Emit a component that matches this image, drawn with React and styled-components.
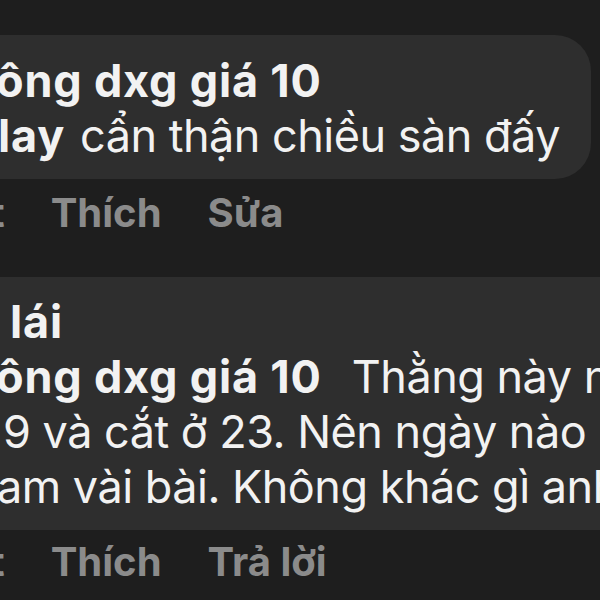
import React from 'react';
import styled, { createGlobalStyle } from 'styled-components';

const Global = createGlobalStyle`
  html, body {
    margin: 0;
    padding: 0;
    background: #1e1e1e;
    overflow: hidden;
  }
  body {
    font-family: Inter, "Noto Sans", "Liberation Sans", sans-serif;
    -webkit-font-smoothing: antialiased;
  }
`;

const Thread = styled.div`
  width: 600px;
  height: 600px;
  padding-top: 35px;
  box-sizing: border-box;
  display: flex;
  flex-direction: column;
  overflow: hidden;
`;

const Bubble = styled.div`
  background: #2e2e2e;
  border-radius: 0 36px 36px 0;
  width: ${p => p.wide ? '700px' : '591px'};
  padding: ${p => p.wide ? '17px 0 16px' : '18px 0 16px'};
  box-sizing: border-box;
  color: #f2f2f2;
  font-size: 45px;
  line-height: 55px;
  letter-spacing: -0.5px;
`;

const Line = styled.div`
  white-space: nowrap;
  margin-left: ${p => p.indent || 0}px;
`;

const Name = styled.b`
  font-weight: 700;
  letter-spacing: 0.8px;
  margin-right: ${p => p.gap || 0}px;
`;

const Actions = styled.div`
  display: flex;
  gap: 46px;
  white-space: nowrap;
  color: #8b8b8b;
  font-size: 40px;
  font-weight: 700;
  line-height: 50px;
  padding: ${p => p.pad};
  margin-left: -85px;
`;

function Comment({ lines, actions, wide, pad }) {
  return (
    <>
      <Bubble wide={wide}>
        {lines.map((l, i) => (
          <Line key={i} indent={l.indent}>
            {l.name && <Name gap={l.gap}>{l.name}</Name>}
            {l.text}
          </Line>
        ))}
      </Bubble>
      <Actions pad={pad}>
        {actions.map(a => <span key={a}>{a}</span>)}
      </Actions>
    </>
  );
}

export default function App() {
  return (
    <>
      <Global />
      <Thread>
        <Comment
          pad="9px 0 39px"
          lines={[
            { name: 'ông dxg giá 10', indent: -4 },
            { name: 'lay', gap: 15, text: 'cẩn thận chiều sàn đấy', indent: -2 },
          ]}
          actions={['phút', 'Thích', 'Sửa']}
        />
        <Comment
          wide
          pad="7px 0 0"
          lines={[
            { name: 'lái', indent: 10 },
            { name: 'ông dxg giá 10', gap: 30, text: 'Thằng này nó', indent: -4 },
            { text: '9 và cắt ở 23. Nên ngày nào', indent: 3 },
            { text: 'am vài bài. Không khác gì anh', indent: -3 },
          ]}
          actions={['phút', 'Thích', 'Trả lời']}
        />
      </Thread>
    </>
  );
}
